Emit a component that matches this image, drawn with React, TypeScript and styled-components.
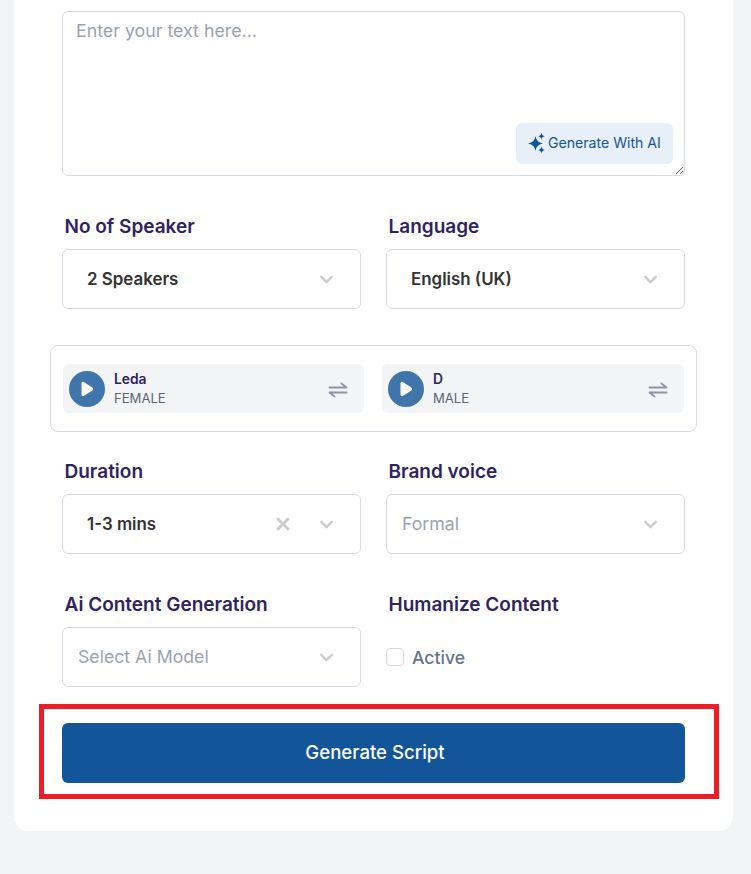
import styled, { createGlobalStyle } from "styled-components";
import { ChevronDown, X } from "lucide-react";

const GlobalStl = createGlobalStyle`
    html, body {
        margin: 0;
        padding: 0;
        background: #f3f4f6;
        font-family: "Inter", "Liberation Sans", sans-serif;
    }
`;

const Sparkles = () => (
    <svg width="20" height="22" viewBox="0 0 20 22" fill="#12569a">
        <path d="M8.5 4 C9.4 8.6 11 10.3 16 11.5 C11 12.7 9.4 14.4 8.5 19 C7.6 14.4 6 12.7 1 11.5 C6 10.3 7.6 8.6 8.5 4Z" />
        <path d="M14.5 .8 C14.9 2.9 15.6 3.6 17.8 4.2 C15.6 4.8 14.9 5.5 14.5 7.6 C14.1 5.5 13.4 4.8 11.2 4.2 C13.4 3.6 14.1 2.9 14.5 .8Z" />
        <path d="M14.5 14.6 C14.9 16.7 15.6 17.4 17.8 18 C15.6 18.6 14.9 19.3 14.5 21.4 C14.1 19.3 13.4 18.6 11.2 18 C13.4 17.4 14.1 16.7 14.5 14.6Z" />
    </svg>
);

const PlayIcon = () => (
    <svg width="14" height="16" viewBox="0 0 14 16" fill="#fff">
        <path d="M1.5 2.2 C1.5 1 2.7 .4 3.7 1 L12.4 6.6 C13.4 7.3 13.4 8.7 12.4 9.4 L3.7 15 C2.7 15.6 1.5 15 1.5 13.8Z" />
    </svg>
);

const SwapIcon = () => (
    <svg width="20" height="16" viewBox="0 0 20 16" fill="none" stroke="#8f93a5" strokeWidth="1.8" strokeLinecap="round" strokeLinejoin="round">
        <path d="M1.5 5.5 H18.5 L13.5 1.5" />
        <path d="M18.5 10.5 H1.5 L6.5 14.5" />
    </svg>
);

type SelectProps = {
    valor: string;
    vazio?: boolean;
    recuo?: number;
    limpar?: boolean;
};

const Select = ({ valor, vazio, recuo = 24, limpar }: SelectProps) => (
    <SelectStl $recuo={recuo}>
        <SelectValorStl $vazio={vazio}>{valor}</SelectValorStl>
        {limpar && <X size={20} color="#cccccc" strokeWidth={3.4} />}
        <ChevronDown size={21} color="#cccccc" strokeWidth={2.8} />
    </SelectStl>
);

const Voz = ({ nome, genero }: { nome: string; genero: string }) => (
    <VozStl>
        <PlayStl><PlayIcon /></PlayStl>
        <VozTextoStl>
            <VozNomeStl>{nome}</VozNomeStl>
            <VozGeneroStl>{genero}</VozGeneroStl>
        </VozTextoStl>
        <SwapStl><SwapIcon /></SwapStl>
    </VozStl>
);

export default function App() {
    return (
        <>
            <GlobalStl />
            <PaginaStl>
                <CardStl>
                    <TextoStl>
                        <AreaStl placeholder="Enter your text here..." />
                        <GerarAiStl>
                            <Sparkles />
                            Generate With AI
                        </GerarAiStl>
                    </TextoStl>

                    <LinhaStl $topo={38}>
                        <div>
                            <LabelStl>No of Speaker</LabelStl>
                            <Select valor="2 Speakers" />
                        </div>
                        <div>
                            <LabelStl>Language</LabelStl>
                            <Select valor="English (UK)" />
                        </div>
                    </LinhaStl>

                    <VozesStl>
                        <Voz nome="Leda" genero="FEMALE" />
                        <Voz nome="D" genero="MALE" />
                    </VozesStl>

                    <LinhaStl $topo={27}>
                        <div>
                            <LabelStl>Duration</LabelStl>
                            <Select valor="1-3 mins" limpar />
                        </div>
                        <div>
                            <LabelStl>Brand voice</LabelStl>
                            <Select valor="Formal" vazio recuo={15} />
                        </div>
                    </LinhaStl>

                    <LinhaStl $topo={38}>
                        <div>
                            <LabelStl>Ai Content Generation</LabelStl>
                            <Select valor="Select Ai Model" vazio recuo={15} />
                        </div>
                        <div>
                            <LabelStl>Humanize Content</LabelStl>
                            <AtivoStl>
                                <CheckStl type="checkbox" />
                                Active
                            </AtivoStl>
                        </div>
                    </LinhaStl>

                    <BotaoStl>Generate Script</BotaoStl>
                </CardStl>
                <DestaqueStl />
            </PaginaStl>
        </>
    );
}

const PaginaStl = styled.div`
    position: relative;
    width: 751px;
    height: 874px;
    overflow: hidden;
    background: #f3f4f6;
`;

const CardStl = styled.div`
    box-sizing: border-box;
    width: 719px;
    height: 831px;
    margin-left: 14px;
    padding: 11px 48px 0;
    background: #ffffff;
    border-radius: 0 0 14px 14px;
`;

const TextoStl = styled.div`
    position: relative;
    height: 165px;
`;

const AreaStl = styled.textarea`
    display: block;
    box-sizing: border-box;
    width: 623px;
    height: 165px;
    padding: 7px 13px;
    border: 1px solid #d9dbe4;
    border-radius: 6px;
    outline: none;
    resize: vertical;
    font-family: inherit;
    font-size: 17.8px;
    line-height: 24px;
    &::placeholder {
        color: #9ca3af;
        opacity: 1;
    }
`;

const GerarAiStl = styled.button`
    position: absolute;
    right: 12px;
    top: 112px;
    display: flex;
    align-items: center;
    gap: 1px;
    box-sizing: border-box;
    width: 157px;
    height: 41px;
    padding: 0 0 2px 11px;
    border: none;
    border-radius: 6px;
    background: #e7eff8;
    color: #12569a;
    font-family: inherit;
    font-size: 14.1px;
`;

const LinhaStl = styled.div<{ $topo: number }>`
    display: grid;
    grid-template-columns: 299px 299px;
    column-gap: 25px;
    margin-top: ${(p) => p.$topo}px;
`;

const LabelStl = styled.div`
    height: 24px;
    margin: 1px 0 10px 2.5px;
    color: #2f2361;
    font-size: 19px;
    font-weight: 600;
    line-height: 24px;
`;

const SelectStl = styled.div<{ $recuo: number }>`
    display: flex;
    align-items: center;
    gap: 22.5px;
    box-sizing: border-box;
    height: 60px;
    padding: 0 23.5px 0 ${(p) => p.$recuo}px;
    border: 1px solid #d9dbe4;
    border-radius: 6px;
`;

const SelectValorStl = styled.span<{ $vazio?: boolean }>`
    flex: 1;
    padding-bottom: ${(p) => (p.$vazio ? 2 : 0)}px;
    color: ${(p) => (p.$vazio ? "#9ca3af" : "#333333")};
    font-size: ${(p) => (p.$vazio ? 17.7 : 16.9)}px;
    font-weight: ${(p) => (p.$vazio ? 400 : 600)};
`;

const VozesStl = styled.div`
    display: grid;
    grid-template-columns: 301px 302px;
    column-gap: 18px;
    box-sizing: border-box;
    width: 647px;
    height: 87px;
    margin: 36px 0 0 -12px;
    padding: 18px 12px;
    border: 1px solid #d9dbe4;
    border-radius: 8px;
`;

const VozStl = styled.div`
    display: flex;
    align-items: center;
    box-sizing: border-box;
    height: 49px;
    padding: 0 16px 0 6px;
    border-radius: 6px;
    background: #f3f4f6;
`;

const PlayStl = styled.div`
    display: flex;
    align-items: center;
    justify-content: center;
    width: 36px;
    height: 36px;
    margin-right: 9px;
    border-radius: 50%;
    background: #4075ac;
`;

const VozTextoStl = styled.div`
    flex: 1;
    display: flex;
    flex-direction: column;
    gap: 4px;
`;

const VozNomeStl = styled.span`
    color: #2f2361;
    font-size: 13.8px;
    font-weight: 600;
    line-height: 15px;
`;

const VozGeneroStl = styled.span`
    color: #5b6478;
    font-size: 13.1px;
    line-height: 15px;
`;

const SwapStl = styled.span`
    display: flex;
    padding-top: 3px;
`;

const AtivoStl = styled.label`
    display: flex;
    align-items: center;
    gap: 8px;
    height: 60px;
    color: #64748b;
    font-size: 17.6px;
    font-weight: 500;
`;

const CheckStl = styled.input`
    appearance: none;
    box-sizing: border-box;
    width: 18px;
    height: 18px;
    margin: 0;
    border: 1px solid #d9dbe4;
    border-radius: 4px;
    background: #ffffff;
`;

const BotaoStl = styled.button`
    display: block;
    width: 623px;
    height: 60px;
    margin-top: 36px;
    padding: 0 0 2px 3px;
    border: none;
    border-radius: 6px;
    background: #125598;
    color: #ffffff;
    font-family: inherit;
    font-size: 18.6px;
    font-weight: 500;
`;

const DestaqueStl = styled.div`
    position: absolute;
    left: 39px;
    top: 704px;
    box-sizing: border-box;
    width: 680px;
    height: 95px;
    border: 5px solid #ee1c25;
    pointer-events: none;
`;
